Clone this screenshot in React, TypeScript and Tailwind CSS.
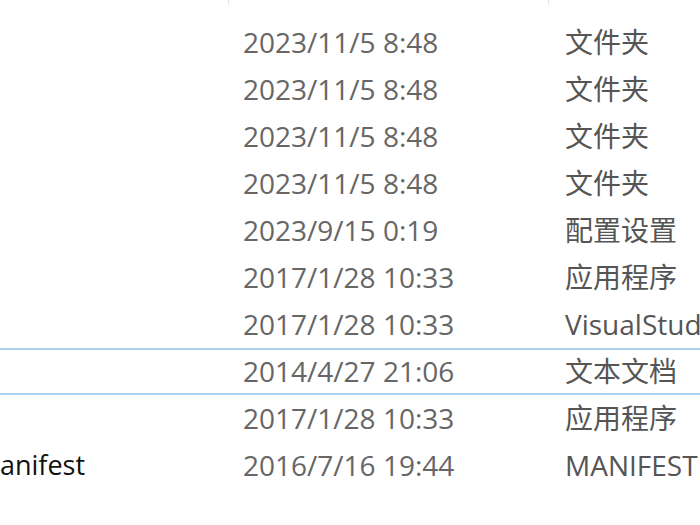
const rows = [
  { name: "", date: "2023/11/5 8:48", type: "文件夹" },
  { name: "", date: "2023/11/5 8:48", type: "文件夹" },
  { name: "", date: "2023/11/5 8:48", type: "文件夹" },
  { name: "", date: "2023/11/5 8:48", type: "文件夹" },
  { name: "", date: "2023/9/15 0:19", type: "配置设置" },
  { name: "", date: "2017/1/28 10:33", type: "应用程序" },
  { name: "", date: "2017/1/28 10:33", type: "VisualStudio.Manifest" },
  { name: "", date: "2014/4/27 21:06", type: "文本文档", selected: true },
  { name: "", date: "2017/1/28 10:33", type: "应用程序" },
  { name: "manifest", date: "2016/7/16 19:44", type: "MANIFEST 文件" },
];

const font = { fontFamily: '"Open Sans", "Noto Sans CJK SC", sans-serif' };

export default function App() {
  return (
    <div className="w-[700px] h-[525px] overflow-hidden bg-white text-[28px]" style={font}>
      <div className="h-[18.5px]">
        <div className="flex h-[5px]">
          <div className="w-[229px] shrink-0 border-r border-[#e5e5e5]" />
          <div className="w-[320px] shrink-0 border-r border-[#e5e5e5]" />
        </div>
      </div>
      {rows.map((row, i) => (
        <div
          key={i}
          className={
            row.selected
              ? "flex h-[47px] items-center border-y-2 border-[#a9cff0]"
              : "flex h-[47px] items-center"
          }
        >
          <div className="w-[229px] shrink-0 overflow-hidden whitespace-nowrap text-[27px] text-[#111]">
            {row.name && <span className="-ml-[25px] inline-block">{row.name}</span>}
          </div>
          <div className="w-[320px] shrink-0 pl-[14px] whitespace-nowrap text-[#666]">{row.date}</div>
          <div className="flex-1 overflow-hidden whitespace-nowrap pl-[16px] text-[#555]">{row.type}</div>
        </div>
      ))}
    </div>
  );
}
